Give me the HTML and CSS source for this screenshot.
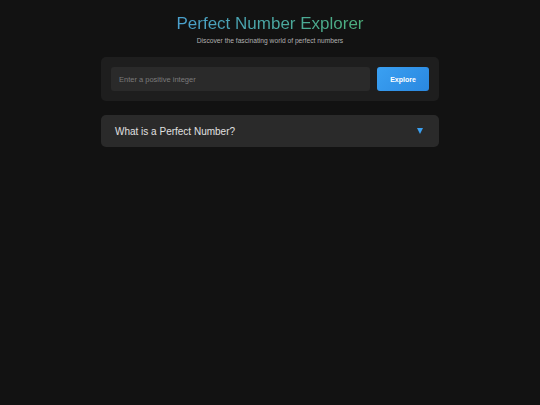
FILE: index.html
```html
<!DOCTYPE html>
<html>
<head>
<meta charset="utf-8">
<link rel="stylesheet" href="styles.css">
</head>
<body>
<div class="container">
  <header class="header">
    <h1 class="title">Perfect Number Explorer</h1>
    <p class="subtitle">Discover the fascinating world of perfect numbers</p>
  </header>
  <div class="search-card">
    <input class="search-input" type="text" placeholder="Enter a positive integer">
    <button class="search-btn">Explore</button>
  </div>
  <div class="accordion">
    <span class="accordion-title">What is a Perfect Number?</span>
    <span class="accordion-icon"></span>
  </div>
</div>
</body>
</html>
```
FILE: styles.css
```css
html, body {
  margin: 0;
  padding: 0;
  background: #121212;
  font-family: "Liberation Sans", Arial, sans-serif;
  color: #e0e0e0;
}
.container {
  width: 338px;
  margin: 0 auto;
  padding-top: 13px;
}
.header {
  text-align: center;
}
.title {
  margin: 0;
  font-size: 17px;
  font-weight: 400;
  line-height: 22px;
  background: linear-gradient(90deg, #4aa0cf, #4caf7a);
  -webkit-background-clip: text;
  background-clip: text;
  color: transparent;
  display: inline-block;
}
.subtitle {
  margin: 1px 0 0;
  font-size: 6.7px;
  line-height: 10px;
  color: #b0b0b0;
}
.search-card {
  margin-top: 11px;
  background: #1e1e1e;
  border-radius: 5px;
  padding: 10px;
  display: flex;
  gap: 7px;
}
.search-input {
  flex: 1;
  height: 24px;
  box-sizing: border-box;
  background: #2a2a2a;
  border: none;
  border-radius: 3px;
  padding: 0 8px;
  font-family: inherit;
  font-size: 7.5px;
  color: #e0e0e0;
  outline: none;
}
.search-input::placeholder {
  color: #7a7a7a;
}
.search-btn {
  width: 52px;
  height: 24px;
  border: none;
  border-radius: 3px;
  background: linear-gradient(135deg, #3aa0f2, #2a88e0);
  color: #ffffff;
  font-family: inherit;
  font-size: 7px;
  font-weight: 700;
  padding: 0;
}
.accordion {
  margin-top: 14px;
  height: 32px;
  box-sizing: border-box;
  background: #2a2a2a;
  border-radius: 5px;
  padding: 0 16px 0 14px;
  display: flex;
  align-items: center;
  justify-content: space-between;
}
.accordion-title {
  font-size: 10px;
  color: #e0e0e0;
}
.accordion-icon {
  width: 0;
  height: 0;
  border-left: 3px solid transparent;
  border-right: 3px solid transparent;
  border-top: 6px solid #3a9ff0;
}
```
